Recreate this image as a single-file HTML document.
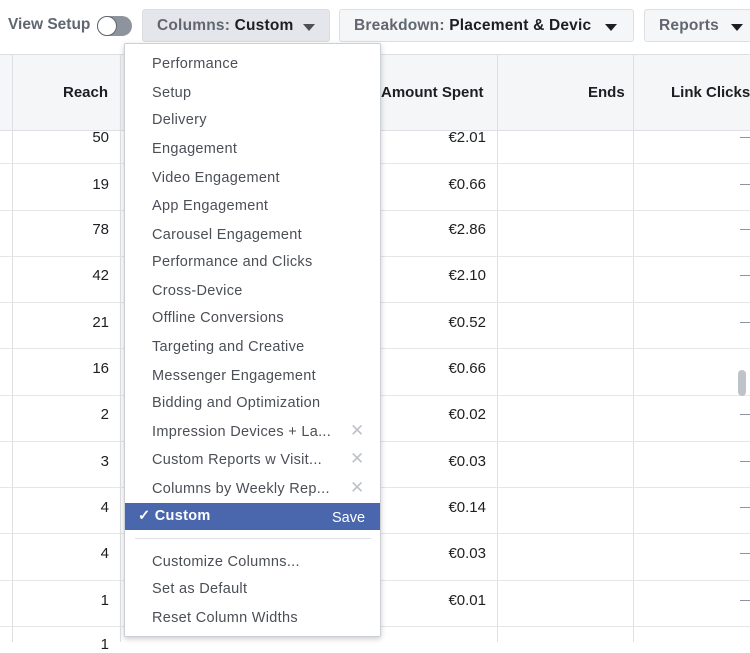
<!DOCTYPE html>
<html><head><meta charset="utf-8"><style>
*{margin:0;padding:0;box-sizing:border-box}
body{width:750px;height:642px;overflow:hidden;background:#fff;font-family:"Liberation Sans",Helvetica,Arial,sans-serif;position:relative;color:#1c1e21}
.abs{position:absolute}
.btn{position:absolute;top:9px;height:33px;border:1px solid #dddfe2;border-radius:3px;background:#f5f6f7;font-size:15.5px;font-weight:bold;color:#606770;line-height:31px;padding-left:14px;white-space:nowrap;overflow:hidden;letter-spacing:.2px}
.tri{position:absolute;top:14px;width:0;height:0;border-left:6px solid transparent;border-right:6px solid transparent;border-top:7px solid #4b4f56}
.hdr{position:absolute;top:54px;height:77px;background:#f5f6f7;border-top:1px solid #dddfe2;border-bottom:1px solid #dddfe2;left:0;width:750px}
.th{position:absolute;top:84px;font-size:15px;font-weight:bold;color:#1c1e21;white-space:nowrap}
.vl{position:absolute;top:54px;bottom:0;width:1px;background:#dddfe2}
.hl{position:absolute;left:0;width:750px;height:1px;background:#e4e6e8}
.num{position:absolute;font-size:15px;color:#1c1e21;text-align:right}
.d{position:absolute;left:740px;width:10px;height:1px;background:#8d949e}
.menu{position:absolute;left:124px;top:43px;width:257px;height:594px;background:#fff;border:1px solid #ccd0d5;box-shadow:0 2px 6px rgba(0,0,0,.2);border-radius:2px}
.it{position:absolute;left:27px;font-size:14.5px;color:#4b4f56;letter-spacing:.3px;white-space:nowrap}
.x{position:absolute;left:225px;font-size:17px;color:#bec3c9}
</style></head><body>
<div class="abs" style="left:8px;top:16px;font-size:15.5px;font-weight:bold;color:#606770">View Setup</div>
<div class="abs" style="left:97px;top:16px;width:35px;height:20px;border-radius:10px;background:#8d949e"></div>
<div class="abs" style="left:97px;top:16px;width:20px;height:20px;border-radius:10px;background:#fff;border:1px solid #606770"></div>
<div class="btn" style="left:142px;width:188px;background:#e4e6eb;border-color:#dadde1">Columns: <span style="color:#1c1e21">Custom</span><div class="tri" style="left:160px"></div></div>
<div class="btn" style="left:339px;width:295px">Breakdown: <span style="color:#1c1e21">Placement &amp; Device</span><div class="tri" style="left:265px;border-top-color:#1c1e21"></div><div class="abs" style="left:252px;top:0;width:12px;height:31px;background:#f5f6f7"></div></div>
<div class="btn" style="left:644px;width:120px">Reports<div class="tri" style="left:86px;border-top-color:#1c1e21"></div></div>

<div class="hdr"></div>
<div class="vl" style="left:12px"></div>
<div class="vl" style="left:120px"></div>
<div class="vl" style="left:497px"></div>
<div class="vl" style="left:633px"></div>
<div class="th" style="left:63px">Reach</div>
<div class="th" style="left:381px">Amount Spent</div>
<div class="th" style="left:588px">Ends</div>
<div class="th" style="left:671px">Link Clicks</div>

<div class="hl" style="top:163px"></div><div class="hl" style="top:210px"></div><div class="hl" style="top:256px"></div><div class="hl" style="top:302px"></div><div class="hl" style="top:348px"></div><div class="hl" style="top:395px"></div><div class="hl" style="top:441px"></div><div class="hl" style="top:487px"></div><div class="hl" style="top:533px"></div><div class="hl" style="top:580px"></div><div class="hl" style="top:626px"></div>

<div class="d" style="top:137px"></div><div class="d" style="top:184px"></div><div class="d" style="top:229px"></div><div class="d" style="top:275px"></div><div class="d" style="top:322px"></div><div class="d" style="top:414px"></div><div class="d" style="top:461px"></div><div class="d" style="top:507px"></div><div class="d" style="top:553px"></div><div class="d" style="top:600px"></div>

<div class="num" style="right:641px;top:129px">50</div><div class="num" style="right:264px;top:129px">€2.01</div>
<div class="num" style="right:641px;top:176px">19</div><div class="num" style="right:264px;top:176px">€0.66</div>
<div class="num" style="right:641px;top:221px">78</div><div class="num" style="right:264px;top:221px">€2.86</div>
<div class="num" style="right:641px;top:267px">42</div><div class="num" style="right:264px;top:267px">€2.10</div>
<div class="num" style="right:641px;top:314px">21</div><div class="num" style="right:264px;top:314px">€0.52</div>
<div class="num" style="right:641px;top:360px">16</div><div class="num" style="right:264px;top:360px">€0.66</div>
<div class="num" style="right:641px;top:406px">2</div><div class="num" style="right:264px;top:406px">€0.02</div>
<div class="num" style="right:641px;top:453px">3</div><div class="num" style="right:264px;top:453px">€0.03</div>
<div class="num" style="right:641px;top:499px">4</div><div class="num" style="right:264px;top:499px">€0.14</div>
<div class="num" style="right:641px;top:545px">4</div><div class="num" style="right:264px;top:545px">€0.03</div>
<div class="num" style="right:641px;top:592px">1</div><div class="num" style="right:264px;top:592px">€0.01</div>
<div class="num" style="right:641px;top:636px">1</div>
<div class="abs" style="left:738px;top:370px;width:8px;height:26px;border-radius:4px;background:#bec3c9"></div>

<div class="menu">
<div class="it" style="top:12px">Performance</div>
<div class="it" style="top:41px">Setup</div>
<div class="it" style="top:68px">Delivery</div>
<div class="it" style="top:97px">Engagement</div>
<div class="it" style="top:126px">Video Engagement</div>
<div class="it" style="top:154px">App Engagement</div>
<div class="it" style="top:183px">Carousel Engagement</div>
<div class="it" style="top:210px">Performance and Clicks</div>
<div class="it" style="top:239px">Cross-Device</div>
<div class="it" style="top:266px">Offline Conversions</div>
<div class="it" style="top:295px">Targeting and Creative</div>
<div class="it" style="top:324px">Messenger Engagement</div>
<div class="it" style="top:351px">Bidding and Optimization</div>
<div class="it" style="top:380px">Impression Devices + La...</div><div class="x" style="top:377px">✕</div>
<div class="it" style="top:408px">Custom Reports w Visit...</div><div class="x" style="top:405px">✕</div>
<div class="it" style="top:437px">Columns by Weekly Rep...</div><div class="x" style="top:434px">✕</div>
<div class="abs" style="left:0;top:459px;width:255px;height:27px;background:#4a67ad"></div>
<div class="it" style="top:464px;left:13px;color:#fff;font-weight:bold">✓ Custom</div>
<div class="abs" style="top:466px;left:207px;color:#fff;font-size:14.5px">Save</div>
<div class="abs" style="left:10px;top:494px;width:236px;height:1px;background:#dddfe2"></div>
<div class="it" style="top:510px">Customize Columns...</div>
<div class="it" style="top:537px">Set as Default</div>
<div class="it" style="top:566px">Reset Column Widths</div>
</div>
</body></html>
